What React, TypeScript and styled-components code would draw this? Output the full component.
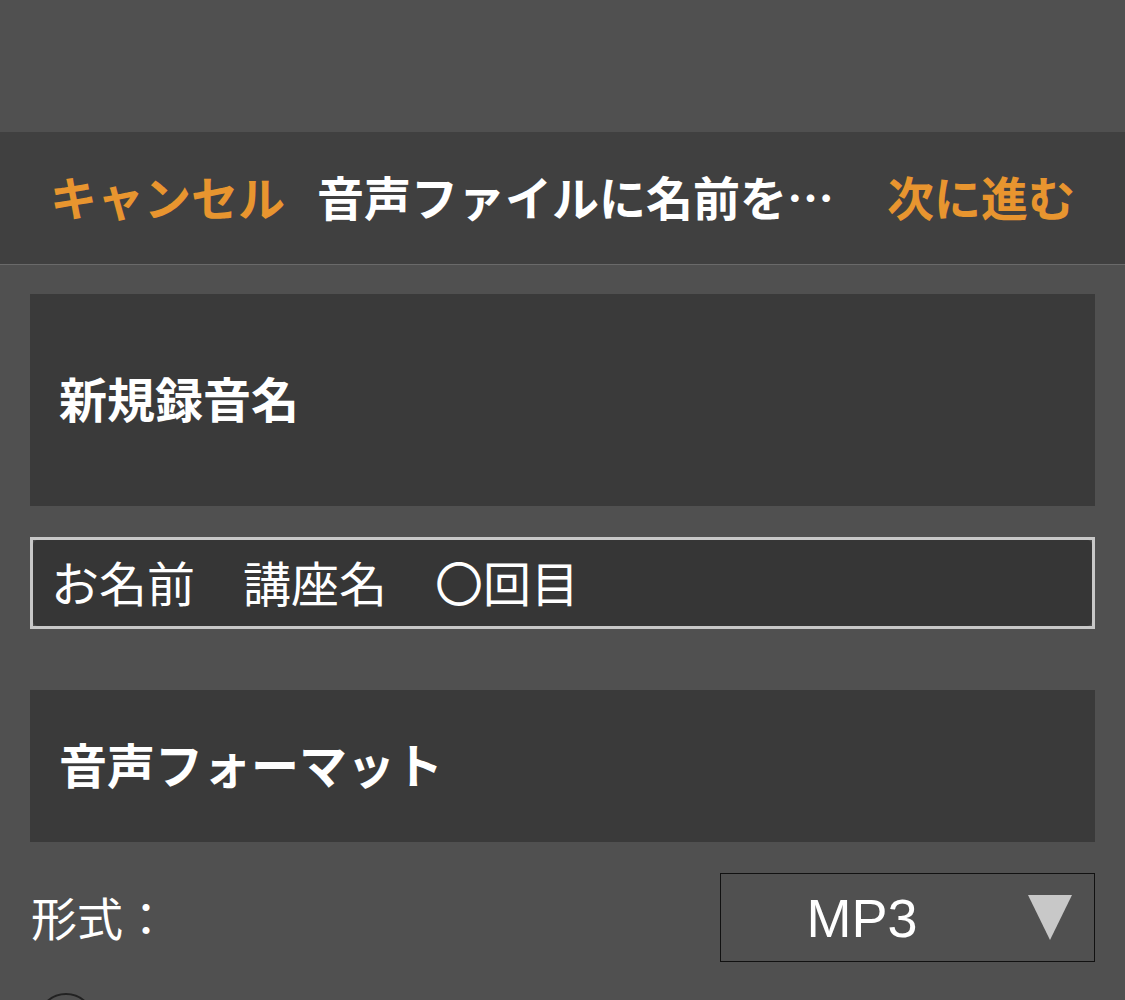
import React from 'react';
import styled, { createGlobalStyle } from 'styled-components';

const GlobalStyle = createGlobalStyle`
  html, body {
    margin: 0;
    padding: 0;
    background: #505050;
  }
  body {
    font-family: "Noto Sans CJK JP", "Noto Sans", sans-serif;
    color: #fff;
  }
`;

const Page = styled.div`
  width: 1125px;
  height: 1000px;
  background: #505050;
  overflow: hidden;
`;

const StatusArea = styled.div`
  height: 132px;
`;

const NavBar = styled.header`
  height: 133px;
  box-sizing: border-box;
  background: #404040;
  border-bottom: 1px solid #6a6a6a;
  display: flex;
  align-items: center;
  gap: 32px;
  padding: 0 50px 5px;
  font-size: 47px;
  font-weight: 600;
`;

const NavButton = styled.button`
  flex: none;
  background: none;
  border: 0;
  padding: 0;
  font: inherit;
  color: #e8952f;
  cursor: pointer;
`;

const NavTitle = styled.h1`
  flex: 1;
  min-width: 0;
  margin: 0;
  font: inherit;
  color: #fff;
  white-space: nowrap;
  overflow: hidden;
  text-overflow: ellipsis;
`;

const Content = styled.main`
  display: flex;
  flex-direction: column;
  padding: 29px 30px 0;
`;

const SectionCard = styled.section<{ $height: number; $after: number }>`
  height: ${(p) => p.$height}px;
  box-sizing: border-box;
  margin-bottom: ${(p) => p.$after}px;
  background: #3a3a3a;
  display: flex;
  align-items: center;
  padding: 0 29px 6px;
  font-size: 48px;
  font-weight: 700;
`;

const NameField = styled.div`
  height: 86px;
  border: 3px solid #c8c8c8;
  background: #4a4a4a;
  margin-bottom: 61px;
  display: flex;
`;

const FieldInput = styled.input`
  flex: 1;
  min-width: 0;
  border: 0;
  outline: none;
  border-radius: 5px;
  background: #363636;
  color: #fff;
  font-family: "Noto Sans CJK JP", "Noto Sans", sans-serif;
  font-size: 48px;
  padding: 0 18px 4px;
`;

const FormatRow = styled.div`
  display: flex;
  align-items: center;
  justify-content: space-between;
  margin-top: 31px;
`;

const RowLabel = styled.span`
  font-size: 46px;
  padding: 0 0 4px 1px;
`;

const SelectBox = styled.div`
  width: 373px;
  height: 87px;
  border: 1px solid #111;
  display: flex;
  align-items: center;
`;

const SelectValue = styled.span`
  flex: 1;
  text-align: center;
  font-family: "Liberation Sans", Arial, sans-serif;
  font-size: 54px;
  padding-left: 2px;
`;

const Arrow = styled.svg`
  width: 44px;
  height: 45px;
  margin: 0 22px 0 27px;
`;

const Radio = styled.span`
  display: block;
  width: 54px;
  height: 54px;
  margin: 31px 0 0 7px;
  border: 2px solid #222;
  border-radius: 50%;
`;

export default function App() {
  return (
    <Page>
      <GlobalStyle />
      <StatusArea />
      <NavBar>
        <NavButton>キャンセル</NavButton>
        <NavTitle>音声ファイルに名前をつけてください</NavTitle>
        <NavButton>次に進む</NavButton>
      </NavBar>
      <Content>
        <SectionCard $height={212} $after={31}>
          新規録音名
        </SectionCard>
        <NameField>
          <FieldInput defaultValue="お名前　講座名　〇回目" />
        </NameField>
        <SectionCard $height={152} $after={0}>
          音声フォーマット
        </SectionCard>
        <FormatRow>
          <RowLabel>形式：</RowLabel>
          <SelectBox>
            <SelectValue>MP3</SelectValue>
            <Arrow viewBox="0 0 44 45">
              <polygon points="0,0 44,0 22,45" fill="#c8c8c8" />
            </Arrow>
          </SelectBox>
        </FormatRow>
        <Radio />
      </Content>
    </Page>
  );
}
